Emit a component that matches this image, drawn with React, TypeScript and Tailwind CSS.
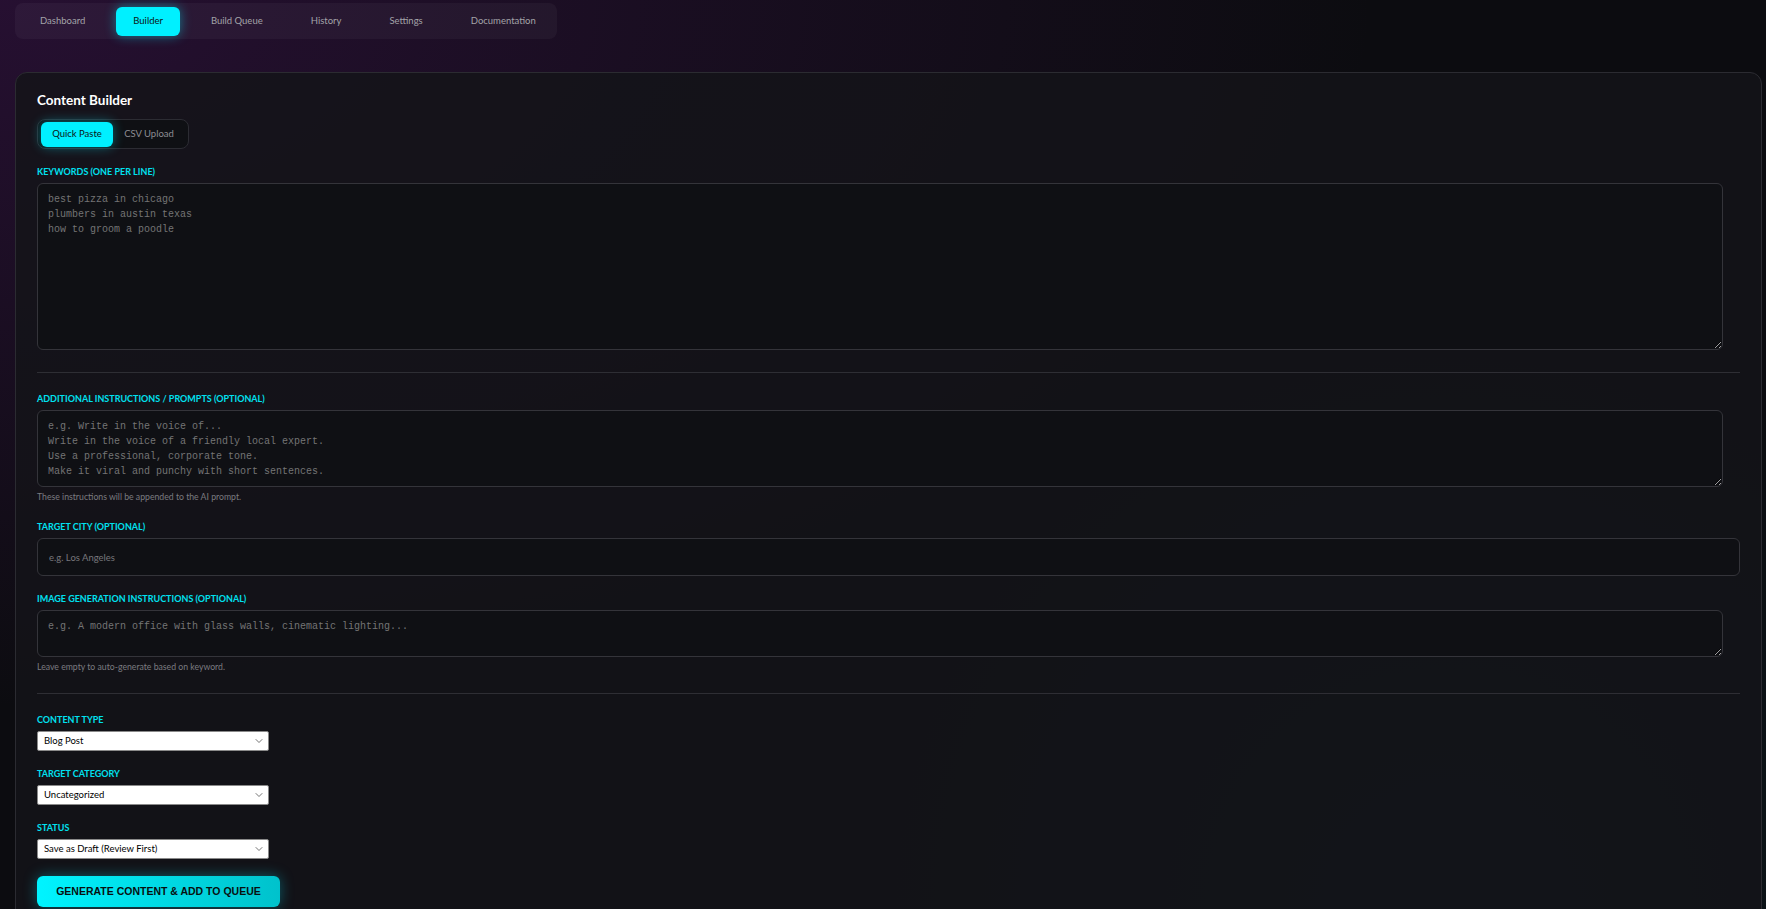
import React, { useState } from 'react';
import { ChevronDown } from 'lucide-react';

const tabs = ['Dashboard', 'Builder', 'Build Queue', 'History', 'Settings', 'Documentation'];

function Label({ children }: { children: React.ReactNode }) {
  return (
    <div className="mb-[3px] text-[9px] leading-[16px] font-bold uppercase text-[#00e1f0]">
      {children}
    </div>
  );
}

function Select({ value }: { value: string }) {
  return (
    <div className="relative w-[232px]">
      <select
        defaultValue={value}
        className="block h-[20px] w-full appearance-none rounded-[2px] border border-[#8a8a8a] bg-white pl-[6px] text-[9.5px] text-black outline-none"
      >
        <option>{value}</option>
      </select>
      <ChevronDown size={12} strokeWidth={1.4} className="pointer-events-none absolute right-[4px] top-[4px] text-[#3a3a3a]" />
    </div>
  );
}

const areaCls =
  'block w-[99%] rounded-md border border-[#34343a] bg-[#0f1014] px-[10px] pt-[8px] pb-[7px] text-[10px] leading-[15px] text-[#8a8a8a] placeholder:text-[#747474] outline-none';

export default function App() {
  const [tab, setTab] = useState('Builder');
  const [mode, setMode] = useState('paste');

  return (
    <div
      className="relative h-[909px] overflow-hidden bg-[#0c0c10] bg-[radial-gradient(ellipse_at_0%_0%,rgba(70,20,90,0.45)_0%,transparent_55%),radial-gradient(circle_at_82%_100%,rgba(0,160,170,0.09)_0%,transparent_35%)] text-white"
      style={{ fontFamily: 'Lato, "Noto Sans", sans-serif' }}
    >
      {/* top nav */}
      <div className="pl-[15px] pt-[3px]">
        <nav className="inline-flex h-[36px] items-center gap-[14px] rounded-lg bg-white/[0.04] pl-[8px] pr-[4px]">
          {tabs.map((t) => (
            <button
              key={t}
              onClick={() => setTab(t)}
              className={`h-[29px] rounded-md px-[17px] text-[9.5px] ${
                tab === t
                  ? 'bg-[#00f0ff] text-[#0b1414] shadow-[0_0_12px_rgba(0,240,255,0.45)]'
                  : 'text-[#a3a3a8]'
              }`}
            >
              {t}
            </button>
          ))}
        </nav>
      </div>

      {/* card */}
      <div className="ml-[15px] mr-[4px] mt-[33px] rounded-xl border border-[#2b2b31] bg-[#141419]/85 px-[21px] pt-[17px] pb-10">
        <h2 className="text-[13.5px] leading-[20px] font-bold text-white">Content Builder</h2>

        <div className="mt-[9px] inline-flex h-[30px] items-center rounded-lg border border-[#2c2c33] bg-[#0f1014] px-[3px]">
          <button
            onClick={() => setMode('paste')}
            className={`h-[25px] w-[72px] rounded-md text-[9.5px] ${
              mode === 'paste' ? 'bg-[#00f0ff] text-[#0b1414] shadow-[0_0_12px_rgba(0,240,255,0.4)]' : 'text-[#8d8d93]'
            }`}
          >
            Quick Paste
          </button>
          <button
            onClick={() => setMode('csv')}
            className={`h-[25px] w-[72px] rounded-md text-[9.5px] ${
              mode === 'csv' ? 'bg-[#00f0ff] text-[#0b1414]' : 'text-[#8d8d93]'
            }`}
          >
            CSV Upload
          </button>
        </div>

        <div className="mt-[15px]">
          <Label>Keywords (one per line)</Label>
          <textarea
            className={`${areaCls} h-[167px]`}
            style={{ fontFamily: '"Liberation Mono", monospace' }}
            placeholder={'best pizza in chicago\nplumbers in austin texas\nhow to groom a poodle'}
          />
        </div>

        <div className="mt-[22px] mb-[18px] h-px bg-[#2e2e34]" />

        <Label>Additional Instructions / Prompts (Optional)</Label>
        <textarea
          className={`${areaCls} h-[77px]`}
          style={{ fontFamily: '"Liberation Mono", monospace' }}
          placeholder={
            'e.g. Write in the voice of...\nWrite in the voice of a friendly local expert.\nUse a professional, corporate tone.\nMake it viral and punchy with short sentences.'
          }
        />
        <p className="mt-[4px] text-[8.7px] leading-[12px] text-[#7b7b80]">These instructions will be appended to the AI prompt.</p>

        <div className="mt-[16px]">
          <Label>Target City (Optional)</Label>
          <input
            className="block h-[38px] w-full rounded-md border border-[#34343a] bg-[#0f1014] pl-[11px] text-[9.5px] text-[#cfcfcf] placeholder:text-[#77777c] outline-none"
            placeholder="e.g. Los Angeles"
          />
        </div>

        <div className="mt-[15px]">
          <Label>Image Generation Instructions (Optional)</Label>
          <textarea
            className={`${areaCls} h-[47px]`}
            style={{ fontFamily: '"Liberation Mono", monospace' }}
            placeholder="e.g. A modern office with glass walls, cinematic lighting..."
          />
          <p className="mt-[4px] text-[8.7px] leading-[12px] text-[#7b7b80]">Leave empty to auto-generate based on keyword.</p>
        </div>

        <div className="mt-[20px] mb-[18px] h-px bg-[#2e2e34]" />

        <Label>Content Type</Label>
        <Select value="Blog Post" />

        <div className="mt-[15px]">
          <Label>Target Category</Label>
          <Select value="Uncategorized" />
        </div>

        <div className="mt-[15px]">
          <Label>Status</Label>
          <Select value="Save as Draft (Review First)" />
        </div>

        <button
          className="mt-[17px] h-[31px] w-[243px] rounded-md bg-gradient-to-r from-[#00f4ff] to-[#00c2cc] text-[10.5px] font-bold uppercase tracking-normal text-[#081010] shadow-[0_0_14px_rgba(0,230,255,0.35)]"
          style={{ fontFamily: '"Liberation Sans", Arial, sans-serif' }}
        >
          Generate Content &amp; Add to Queue
        </button>
      </div>
    </div>
  );
}
